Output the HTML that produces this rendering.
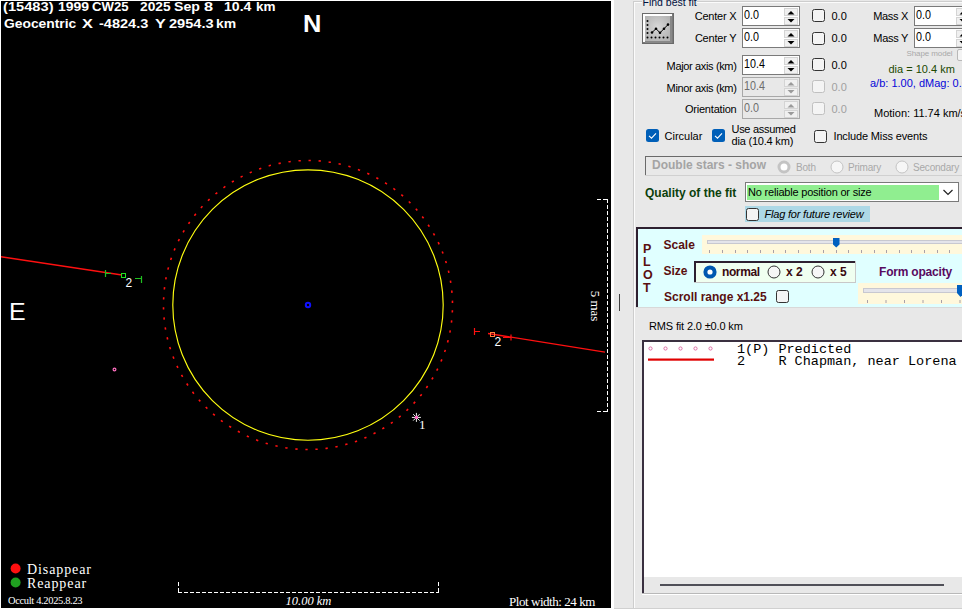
<!DOCTYPE html>
<html><head><meta charset="utf-8">
<style>
*{box-sizing:border-box}
html,body{margin:0;padding:0}
body{width:962px;height:609px;overflow:hidden;position:relative;background:#e8e8e8;font-family:"Liberation Sans",sans-serif;}
.a{position:absolute;white-space:nowrap}
#plotbg{left:0;top:0;width:614px;height:609px;background:#fff}
#plot{left:1px;top:1px;width:610px;height:607px;background:#000;overflow:hidden}
.w{color:#fff}
.ser{font-family:"Liberation Serif",serif}
.hd{font-size:13.5px;font-weight:bold;line-height:14px}
.mono{font-family:"Liberation Mono",monospace}
.lbl{font-size:11px;color:#000}
.inp{background:#fff;border:1px solid #7a7a7a;}
.inp.dis{background:#f0f0f0;border-color:#c4c4c4}
.cb{width:13px;height:13px;border:1px solid #333;border-radius:2px;background:#f7f7f7}
.cb.dis{border-color:#c0c0c0}
.cbon{width:13px;height:13px;border-radius:2px;background:#005fb8}
.spin{width:15px}
</style></head><body>
<div class="a" id="plotbg"></div>
<div class="a" id="plot"></div>
<svg width="962" height="609" style="position:absolute;left:0;top:0">
<defs><clipPath id="pc"><rect x="1" y="1" width="610" height="607"/></clipPath></defs>
<g clip-path="url(#pc)">
<circle cx="308" cy="305" r="144.5" fill="none" stroke="#ff1010" stroke-width="1.6" stroke-dasharray="2.3 7.788" stroke-dashoffset="-5.3"/>
<circle cx="308" cy="305" r="135.2" fill="none" stroke="#ffff10" stroke-width="1.15"/>
<circle cx="308" cy="305" r="2.2" fill="none" stroke="#1010ff" stroke-width="2"/>
<line x1="0" y1="256.6" x2="122" y2="275" stroke="#ff1010" stroke-width="1.3"/>
<rect x="121.5" y="273.5" width="4" height="4" fill="none" stroke="#20e020" stroke-width="1"/>
<path d="M105.5 270V277M106 273.5H111M141.5 276V283M135 278.5H141" stroke="#20c020" stroke-width="1.2" fill="none"/>
<line x1="488" y1="333.5" x2="605" y2="352.2" stroke="#ff1010" stroke-width="1.3"/>
<rect x="490.5" y="332.5" width="4" height="4" fill="none" stroke="#ff8040" stroke-width="1"/>
<path d="M474.5 328V335M475 331.5H480M511 334.5V340.5M503 337.5H511" stroke="#ff1010" stroke-width="1.2" fill="none"/>
<path d="M416.4 412.9V421.9M411.9 417.4H420.9M413.2 414.2L419.6 420.6M413.2 420.6L419.6 414.2" stroke="#f0f0f0" stroke-width="1"/>
<circle cx="416.4" cy="417.4" r="1.6" fill="#ff60c0"/>
<circle cx="114.5" cy="369.5" r="1.4" fill="none" stroke="#ff70c0" stroke-width="1.2"/>
<g fill="none" stroke="#fff" stroke-width="1" stroke-dasharray="4 2">
<path d="M597 199.5H608"/><path d="M607.5 199V412"/><path d="M597 411.5H608"/>
<path d="M178.5 582V593"/><path d="M178 592.5H439"/><path d="M438.5 582V593"/>
</g>

<circle cx="15.6" cy="568.5" r="5" fill="#ff1010"/>
<circle cx="15.6" cy="582.5" r="5" fill="#20a020"/>
</g>
</svg>

<div class="a w" style="left:302.5px;top:11.5px;font-size:24px;font-weight:bold;line-height:24px;transform:scaleX(1.06);transform-origin:left">N</div>
<div class="a w" style="left:9px;top:299px;font-size:24px;line-height:25px;transform:scaleX(1.04);transform-origin:left">E</div>
<div class="a w" style="left:125.5px;top:277px;font-size:12px;line-height:12px">2</div>
<div class="a w" style="left:494.5px;top:336px;font-size:12px;line-height:12px">2</div>
<div class="a w ser" style="left:419px;top:418px;font-size:13px;line-height:13px">1</div>
<div class="a w ser" style="left:27px;top:562px;font-size:14px;line-height:16px;letter-spacing:0.9px">Disappear</div>
<div class="a w ser" style="left:27px;top:576px;font-size:14px;line-height:16px;letter-spacing:0.9px">Reappear</div>
<div class="a w ser" style="left:8px;top:595px;font-size:10.5px;line-height:12px;letter-spacing:-0.35px">Occult 4.2025.8.23</div>
<div class="a w ser" style="left:285.5px;top:594px;font-size:12.5px;font-style:italic;line-height:15px">10.00 km</div>
<div class="a w ser" style="left:509px;top:593.5px;font-size:13px;line-height:15px;letter-spacing:-0.45px">Plot width: 24 km</div>
<div class="a w ser" style="left:580px;top:298px;font-size:13px;line-height:16px;transform:rotate(90deg);transform-origin:center">5 mas</div>
<!--HDR-->
<div class="a w hd" style="left:3.46px;top:0px;transform:scaleX(1.087);transform-origin:0 0">(15483)</div>
<div class="a w hd" style="left:57.97px;top:0px;transform:scaleX(1.034);transform-origin:0 0">1999</div>
<div class="a w hd" style="left:92.00px;top:0px;transform:scaleX(0.973);transform-origin:0 0">CW25</div>
<div class="a w hd" style="left:140.00px;top:0px;transform:scaleX(1.020);transform-origin:0 0">2025</div>
<div class="a w hd" style="left:173.95px;top:0px;transform:scaleX(1.047);transform-origin:0 0">Sep</div>
<div class="a w hd" style="left:204.39px;top:0px;transform:scaleX(1.206);transform-origin:0 0">8</div>
<div class="a w hd" style="left:223.96px;top:0px;transform:scaleX(1.041);transform-origin:0 0">10.4</div>
<div class="a w hd" style="left:256.00px;top:0px;transform:scaleX(1.000);transform-origin:0 0">km</div>
<div class="a w hd" style="left:4.39px;top:17px;transform:scaleX(1.024);transform-origin:0 0">Geocentric</div>
<div class="a w hd" style="left:81.78px;top:17px;transform:scaleX(1.211);transform-origin:0 0">X</div>
<div class="a w hd" style="left:99.00px;top:17px;transform:scaleX(1.076);transform-origin:0 0">-4824.3</div>
<div class="a w hd" style="left:155.3px;top:17px;transform:scaleX(1.2);transform-origin:0 0">Y</div>
<div class="a w hd" style="left:169px;top:17px;transform:scaleX(1.08);transform-origin:0 0">2954.3</div>
<div class="a w hd" style="left:215.78px;top:17px;transform:scaleX(1.033);transform-origin:0 0">km</div>
<!--/HDR-->
<!--PANEL-->
<div class="a" style="left:633px;top:1px;width:1px;height:608px;background:#cdcdcd"></div>
<div class="a" style="left:634px;top:2px;width:1px;height:607px;background:#fbfbfb"></div>
<div class="a" style="left:633px;top:1px;width:9px;height:1px;background:#cdcdcd"></div>
<div class="a" style="left:697px;top:1px;width:265px;height:1px;background:#cdcdcd"></div>
<div class="a" style="left:634px;top:2px;width:8px;height:1px;background:#fbfbfb"></div>
<div class="a" style="left:697px;top:2px;width:265px;height:1px;background:#fbfbfb"></div>
<div class="a" style="left:642.5px;top:-3px;font-size:10.5px;line-height:10.5px;color:#001040;font-weight:normal;font-style:normal;">Find best fit</div>
<svg class="a" style="left:642px;top:13px" width="32" height="32" viewBox="0 0 32 32">
<defs><radialGradient id="bg1" cx="50%" cy="45%" r="60%"><stop offset="0" stop-color="#d8d8d8"/><stop offset="1" stop-color="#b4b4b4"/></radialGradient></defs>
<rect x="0.5" y="0.5" width="31" height="30" fill="#7a7a7a" stroke="#6a6a6a"/>
<rect x="1" y="1" width="29" height="28" fill="#fff"/>
<rect x="3" y="3" width="27" height="27" fill="#888"/>
<rect x="3" y="3" width="25" height="25" fill="url(#bg1)"/>
<g fill="#000">
<circle cx="5.5" cy="8" r="1"/><circle cx="5.5" cy="12" r="1"/><circle cx="5.5" cy="16" r="1"/><circle cx="5.5" cy="20" r="1"/><circle cx="5.5" cy="24.5" r="1"/>
<circle cx="9.5" cy="24.5" r="1"/><circle cx="13.5" cy="24.5" r="1"/><circle cx="17.5" cy="24.5" r="1"/><circle cx="21.5" cy="24.5" r="1"/><circle cx="25.5" cy="24.5" r="1"/>
<circle cx="10" cy="19.5" r="1.3"/><circle cx="14" cy="15.7" r="1.3"/><circle cx="18" cy="19.8" r="1.3"/><circle cx="22" cy="15.7" r="1.3"/><circle cx="26" cy="11.6" r="1.3"/>
</g>
<path d="M10 19.5L14 15.7L18 19.8L22 15.7L26 11.6" stroke="#000" stroke-width="1" fill="none"/>
</svg>
<div class="a" style="right:225.5px;top:11px;font-size:11px;line-height:11px;color:#000;font-weight:normal;font-style:normal;letter-spacing:-0.2px">Center X</div>
<div class="a" style="left:742px;top:6px;width:58px;height:20px;background:#fff;border:1px solid #7a7a7a"></div>
<div class="a" style="left:743.5px;top:9px;font-size:12.5px;line-height:12.5px;color:#000;font-weight:normal;font-style:normal;transform:scaleX(0.86);transform-origin:0 0">0.0</div>
<div class="a" style="left:784px;top:7.5px;width:14px;height:8px;background:#f0f0f0;border:1px solid #d4d4d4"></div>
<div class="a" style="left:784px;top:16.5px;width:14px;height:8px;background:#f0f0f0;border:1px solid #d4d4d4"></div>
<svg class="a" style="left:784px;top:7.5px" width="14" height="17"><path d="M3.5 6.5L7 3L10.5 6.5Z" fill="#000"/><path d="M3.5 11L7 14.5L10.5 11Z" fill="#000"/></svg>
<div class="a" style="left:812px;top:9.4px;width:13px;height:13px;border:1px solid #333;border-radius:2.5px;background:#f4f4f4"></div>
<div class="a" style="left:831.5px;top:11px;font-size:11px;line-height:11px;color:#000;font-weight:normal;font-style:normal;">0.0</div>
<div class="a" style="right:225.5px;top:33px;font-size:11px;line-height:11px;color:#000;font-weight:normal;font-style:normal;letter-spacing:-0.2px">Center Y</div>
<div class="a" style="left:742px;top:28px;width:58px;height:20px;background:#fff;border:1px solid #7a7a7a"></div>
<div class="a" style="left:743.5px;top:31px;font-size:12.5px;line-height:12.5px;color:#000;font-weight:normal;font-style:normal;transform:scaleX(0.86);transform-origin:0 0">0.0</div>
<div class="a" style="left:784px;top:29.5px;width:14px;height:8px;background:#f0f0f0;border:1px solid #d4d4d4"></div>
<div class="a" style="left:784px;top:38.5px;width:14px;height:8px;background:#f0f0f0;border:1px solid #d4d4d4"></div>
<svg class="a" style="left:784px;top:29.5px" width="14" height="17"><path d="M3.5 6.5L7 3L10.5 6.5Z" fill="#000"/><path d="M3.5 11L7 14.5L10.5 11Z" fill="#000"/></svg>
<div class="a" style="left:812px;top:31.5px;width:13px;height:13px;border:1px solid #333;border-radius:2.5px;background:#f4f4f4"></div>
<div class="a" style="left:831.5px;top:33px;font-size:11px;line-height:11px;color:#000;font-weight:normal;font-style:normal;">0.0</div>
<div class="a" style="right:225.5px;top:61px;font-size:11px;line-height:11px;color:#000;font-weight:normal;font-style:normal;letter-spacing:-0.35px">Major axis (km)</div>
<div class="a" style="left:742px;top:55px;width:58px;height:20px;background:#fff;border:1px solid #7a7a7a"></div>
<div class="a" style="left:743.5px;top:58px;font-size:12.5px;line-height:12.5px;color:#000;font-weight:normal;font-style:normal;transform:scaleX(0.86);transform-origin:0 0">10.4</div>
<div class="a" style="left:784px;top:56.5px;width:14px;height:8px;background:#f0f0f0;border:1px solid #d4d4d4"></div>
<div class="a" style="left:784px;top:65.5px;width:14px;height:8px;background:#f0f0f0;border:1px solid #d4d4d4"></div>
<svg class="a" style="left:784px;top:56.5px" width="14" height="17"><path d="M3.5 6.5L7 3L10.5 6.5Z" fill="#000"/><path d="M3.5 11L7 14.5L10.5 11Z" fill="#000"/></svg>
<div class="a" style="left:812px;top:58px;width:13px;height:13px;border:1px solid #333;border-radius:2.5px;background:#f4f4f4"></div>
<div class="a" style="left:831.5px;top:60px;font-size:11px;line-height:11px;color:#000;font-weight:normal;font-style:normal;">0.0</div>
<div class="a" style="right:225.5px;top:83px;font-size:11px;line-height:11px;color:#000;font-weight:normal;font-style:normal;letter-spacing:-0.35px">Minor axis (km)</div>
<div class="a" style="left:742px;top:77px;width:58px;height:20px;background:#e8e8e8;border:1px solid #a8a8a8"></div>
<div class="a" style="left:743.5px;top:80px;font-size:12.5px;line-height:12.5px;color:#6d6d6d;font-weight:normal;font-style:normal;transform:scaleX(0.86);transform-origin:0 0">10.4</div>
<div class="a" style="left:784px;top:78.5px;width:14px;height:8px;background:#f0f0f0;border:1px solid #d4d4d4"></div>
<div class="a" style="left:784px;top:87.5px;width:14px;height:8px;background:#f0f0f0;border:1px solid #d4d4d4"></div>
<svg class="a" style="left:784px;top:78.5px" width="14" height="17"><path d="M3.5 6.5L7 3L10.5 6.5Z" fill="#9a9a9a"/><path d="M3.5 11L7 14.5L10.5 11Z" fill="#9a9a9a"/></svg>
<div class="a" style="left:812px;top:80.3px;width:13px;height:13px;border:1px solid #c0c0c0;border-radius:2.5px;background:#f4f4f4"></div>
<div class="a" style="left:831.5px;top:82px;font-size:11px;line-height:11px;color:#a0a0a0;font-weight:normal;font-style:normal;">0.0</div>
<div class="a" style="right:225.5px;top:104px;font-size:11px;line-height:11px;color:#000;font-weight:normal;font-style:normal;letter-spacing:-0.2px">Orientation</div>
<div class="a" style="left:742px;top:99px;width:58px;height:20px;background:#e8e8e8;border:1px solid #a8a8a8"></div>
<div class="a" style="left:743.5px;top:102px;font-size:12.5px;line-height:12.5px;color:#6d6d6d;font-weight:normal;font-style:normal;transform:scaleX(0.86);transform-origin:0 0">0.0</div>
<div class="a" style="left:784px;top:100.5px;width:14px;height:8px;background:#f0f0f0;border:1px solid #d4d4d4"></div>
<div class="a" style="left:784px;top:109.5px;width:14px;height:8px;background:#f0f0f0;border:1px solid #d4d4d4"></div>
<svg class="a" style="left:784px;top:100.5px" width="14" height="17"><path d="M3.5 6.5L7 3L10.5 6.5Z" fill="#9a9a9a"/><path d="M3.5 11L7 14.5L10.5 11Z" fill="#9a9a9a"/></svg>
<div class="a" style="left:812px;top:102.4px;width:13px;height:13px;border:1px solid #c0c0c0;border-radius:2.5px;background:#f4f4f4"></div>
<div class="a" style="left:831.5px;top:104px;font-size:11px;line-height:11px;color:#a0a0a0;font-weight:normal;font-style:normal;">0.0</div>
<div class="a" style="right:54px;top:11px;font-size:11px;line-height:11px;color:#000;font-weight:normal;font-style:normal;letter-spacing:-0.3px">Mass X</div>
<div class="a" style="right:54px;top:33px;font-size:11px;line-height:11px;color:#000;font-weight:normal;font-style:normal;letter-spacing:-0.3px">Mass Y</div>
<div class="a" style="left:914px;top:6px;width:58px;height:20px;background:#fff;border:1px solid #7a7a7a"></div>
<div class="a" style="left:915.5px;top:9px;font-size:12.5px;line-height:12.5px;color:#000;font-weight:normal;font-style:normal;transform:scaleX(0.86);transform-origin:0 0">0.0</div>
<div class="a" style="left:956px;top:7.5px;width:14px;height:8px;background:#f0f0f0;border:1px solid #d4d4d4"></div>
<div class="a" style="left:956px;top:16.5px;width:14px;height:8px;background:#f0f0f0;border:1px solid #d4d4d4"></div>
<svg class="a" style="left:956px;top:7.5px" width="14" height="17"><path d="M3.5 6.5L7 3L10.5 6.5Z" fill="#000"/><path d="M3.5 11L7 14.5L10.5 11Z" fill="#000"/></svg>
<div class="a" style="left:914px;top:28px;width:58px;height:20px;background:#fff;border:1px solid #7a7a7a"></div>
<div class="a" style="left:915.5px;top:31px;font-size:12.5px;line-height:12.5px;color:#000;font-weight:normal;font-style:normal;transform:scaleX(0.86);transform-origin:0 0">0.0</div>
<div class="a" style="left:956px;top:29.5px;width:14px;height:8px;background:#f0f0f0;border:1px solid #d4d4d4"></div>
<div class="a" style="left:956px;top:38.5px;width:14px;height:8px;background:#f0f0f0;border:1px solid #d4d4d4"></div>
<svg class="a" style="left:956px;top:29.5px" width="14" height="17"><path d="M3.5 6.5L7 3L10.5 6.5Z" fill="#000"/><path d="M3.5 11L7 14.5L10.5 11Z" fill="#000"/></svg>
<div class="a" style="left:906.5px;top:50px;font-size:8px;line-height:8px;color:#a8a8a8;font-weight:normal;font-style:normal;letter-spacing:-0.1px">Shape model</div>
<div class="a" style="left:957px;top:49px;width:10px;height:12px;border:1px solid #b8b8b8;border-radius:2px;background:#f4f4f4"></div>
<div class="a" style="left:888.5px;top:64px;font-size:11px;line-height:11px;color:#204800;font-weight:normal;font-style:normal;">dia = 10.4 km</div>
<div class="a" style="left:870px;top:78px;font-size:11px;line-height:11px;color:#0606d8;font-weight:normal;font-style:normal;">a/b: 1.00, dMag: 0.0</div>
<div class="a" style="left:874px;top:108px;font-size:11px;line-height:11px;color:#000;font-weight:normal;font-style:normal;">Motion: 11.74 km/s</div>
<svg class="a" style="left:646px;top:129px" width="13" height="13"><rect width="13" height="13" rx="2.5" fill="#005fb8"/><path d="M3 6.8L5.5 9.2L10 4.3" stroke="#fff" stroke-width="1.1" fill="none"/></svg>
<div class="a" style="left:664.5px;top:131px;font-size:11px;line-height:11px;color:#000;font-weight:normal;font-style:normal;">Circular</div>
<svg class="a" style="left:712px;top:129px" width="13" height="13"><rect width="13" height="13" rx="2.5" fill="#005fb8"/><path d="M3 6.8L5.5 9.2L10 4.3" stroke="#fff" stroke-width="1.1" fill="none"/></svg>
<div class="a" style="left:731.5px;top:124px;font-size:11px;line-height:11px;color:#000;font-weight:normal;font-style:normal;letter-spacing:-0.3px">Use assumed</div>
<div class="a" style="left:731.5px;top:136px;font-size:11px;line-height:11px;color:#000;font-weight:normal;font-style:normal;letter-spacing:-0.2px">dia (10.4 km)</div>
<div class="a" style="left:814px;top:130px;width:13px;height:13px;border:1px solid #333;border-radius:2.5px;background:#f4f4f4"></div>
<div class="a" style="left:833.5px;top:131px;font-size:11px;line-height:11px;color:#000;font-weight:normal;font-style:normal;letter-spacing:-0.15px">Include Miss events</div>
<div class="a" style="left:645px;top:156px;width:330px;height:20px;border-top:1px solid #6a6a6a;border-left:1px solid #6a6a6a;border-bottom:1px solid #fff;background:#e8e8e8"></div>
<div class="a" style="left:645px;top:175px;width:330px;height:1px;background:#d0d0d0"></div>
<div class="a" style="left:652px;top:159px;font-size:12px;line-height:12px;color:#a4a4a4;font-weight:bold;font-style:normal;">Double stars - show</div>
<svg class="a" style="left:777px;top:160px" width="14" height="14"><circle cx="7" cy="7" r="5" fill="#fff" stroke="#c4c4c4" stroke-width="3"/></svg>
<div class="a" style="left:796px;top:163px;font-size:10px;line-height:10px;color:#a8a8a8;font-weight:normal;font-style:normal;letter-spacing:-0.2px">Both</div>
<svg class="a" style="left:830px;top:160px" width="14" height="14"><circle cx="7" cy="7" r="6" fill="#f6f6f6" stroke="#c4c4c4" stroke-width="1"/></svg>
<div class="a" style="left:848px;top:163px;font-size:10px;line-height:10px;color:#a8a8a8;font-weight:normal;font-style:normal;letter-spacing:-0.2px">Primary</div>
<svg class="a" style="left:895px;top:160px" width="14" height="14"><circle cx="7" cy="7" r="6" fill="#f6f6f6" stroke="#c4c4c4" stroke-width="1"/></svg>
<div class="a" style="left:913px;top:163px;font-size:10px;line-height:10px;color:#a8a8a8;font-weight:normal;font-style:normal;letter-spacing:-0.2px">Secondary</div>
<div class="a" style="left:645px;top:187px;font-size:12px;line-height:12px;color:#0c400c;font-weight:bold;font-style:normal;">Quality of the fit</div>
<div class="a" style="left:745px;top:182px;width:214px;height:20px;background:#fff;border:1px solid #7a7a7a"></div>
<div class="a" style="left:747px;top:185px;width:192px;height:15px;background:#90ee90"></div>
<div class="a" style="left:748px;top:187px;font-size:11px;line-height:11px;color:#000;font-weight:normal;font-style:normal;letter-spacing:-0.2px">No reliable position or size</div>
<svg class="a" style="left:940px;top:186px" width="16" height="12"><path d="M3.5 4L8 8.5L12.5 4" stroke="#222" stroke-width="1.2" fill="none"/></svg>
<div class="a" style="left:745px;top:206px;width:125px;height:16px;background:#add8e6"></div>
<div class="a" style="left:745.5px;top:207.5px;width:13px;height:13px;border:1px solid #333;border-radius:2.5px;background:#f4f4f4"></div>
<div class="a" style="left:764.5px;top:209px;font-size:11px;line-height:11px;color:#000;font-weight:normal;font-style:italic;letter-spacing:-0.2px">Flag for future review</div>
<div class="a" style="left:636px;top:227px;width:340px;height:81px;border-top:2px solid #2e2030;border-left:2px solid #2e2030;background:#e0ffff"></div>
<div class="a" style="left:636px;top:306.5px;width:340px;height:1.5px;background:#d8d8d8"></div>
<div class="a" style="left:643px;top:243px;font-size:12.5px;line-height:12.5px;color:#5a1010;font-weight:bold;font-style:normal;">P</div>
<div class="a" style="left:643px;top:256px;font-size:12.5px;line-height:12.5px;color:#5a1010;font-weight:bold;font-style:normal;">L</div>
<div class="a" style="left:643px;top:269px;font-size:12.5px;line-height:12.5px;color:#5a1010;font-weight:bold;font-style:normal;">O</div>
<div class="a" style="left:643px;top:282px;font-size:12.5px;line-height:12.5px;color:#5a1010;font-weight:bold;font-style:normal;">T</div>
<div class="a" style="left:663.5px;top:239px;font-size:12px;line-height:12px;color:#5a1010;font-weight:bold;font-style:normal;">Scale</div>
<div class="a" style="left:702px;top:235px;width:270px;height:18.5px;background:#fff8dc"></div>
<div class="a" style="left:707px;top:239.5px;width:260px;height:4.5px;background:#e4e4ea;border:1px solid #c8c8d0"></div>
<svg class="a" style="left:702px;top:235px" width="260" height="19"><line x1="7.5" y1="15" x2="7.5" y2="18" stroke="#a8a0a8"/><line x1="20.5" y1="15" x2="20.5" y2="18" stroke="#a8a0a8"/><line x1="33.5" y1="15" x2="33.5" y2="18" stroke="#a8a0a8"/><line x1="45.5" y1="15" x2="45.5" y2="18" stroke="#a8a0a8"/><line x1="58.5" y1="15" x2="58.5" y2="18" stroke="#a8a0a8"/><line x1="71.5" y1="15" x2="71.5" y2="18" stroke="#a8a0a8"/><line x1="83.5" y1="15" x2="83.5" y2="18" stroke="#a8a0a8"/><line x1="96.5" y1="15" x2="96.5" y2="18" stroke="#a8a0a8"/><line x1="108.5" y1="15" x2="108.5" y2="18" stroke="#a8a0a8"/><line x1="121.5" y1="15" x2="121.5" y2="18" stroke="#a8a0a8"/><line x1="134.5" y1="15" x2="134.5" y2="18" stroke="#a8a0a8"/><line x1="146.5" y1="15" x2="146.5" y2="18" stroke="#a8a0a8"/><line x1="159.5" y1="15" x2="159.5" y2="18" stroke="#a8a0a8"/><line x1="172.5" y1="15" x2="172.5" y2="18" stroke="#a8a0a8"/><line x1="184.5" y1="15" x2="184.5" y2="18" stroke="#a8a0a8"/><line x1="197.5" y1="15" x2="197.5" y2="18" stroke="#a8a0a8"/><line x1="209.5" y1="15" x2="209.5" y2="18" stroke="#a8a0a8"/><line x1="222.5" y1="15" x2="222.5" y2="18" stroke="#a8a0a8"/><line x1="235.5" y1="15" x2="235.5" y2="18" stroke="#a8a0a8"/><line x1="247.5" y1="15" x2="247.5" y2="18" stroke="#a8a0a8"/><line x1="260.5" y1="15" x2="260.5" y2="18" stroke="#a8a0a8"/></svg>
<svg class="a" style="left:833px;top:238px" width="7" height="10"><path d="M0 0H6.5V6.5L3.25 9.5L0 6.5Z" fill="#0060c0"/></svg>
<div class="a" style="left:663.5px;top:265px;font-size:12px;line-height:12px;color:#5a1010;font-weight:bold;font-style:normal;">Size</div>
<div class="a" style="left:694px;top:261px;width:162px;height:22px;border-top:2px solid #2e2030;border-left:2px solid #2e2030;background:#f0fff0"></div>
<div class="a" style="left:694px;top:282px;width:162px;height:1px;background:#c8c8c8"></div>
<div class="a" style="left:855px;top:261px;width:1px;height:22px;background:#c8c8c8"></div>
<svg class="a" style="left:703px;top:265px" width="14" height="14"><circle cx="7" cy="7" r="4.6" fill="#fff" stroke="#0058b0" stroke-width="4"/></svg>
<div class="a" style="left:722px;top:266px;font-size:12px;line-height:12px;color:#3a0a10;font-weight:bold;font-style:normal;letter-spacing:-0.4px">normal</div>
<svg class="a" style="left:767px;top:265px" width="14" height="14"><circle cx="7" cy="7" r="6" fill="#f6f6f6" stroke="#333" stroke-width="1"/></svg>
<div class="a" style="left:786px;top:266px;font-size:12px;line-height:12px;color:#3a0a10;font-weight:bold;font-style:normal;">x 2</div>
<svg class="a" style="left:811px;top:265px" width="14" height="14"><circle cx="7" cy="7" r="6" fill="#f6f6f6" stroke="#333" stroke-width="1"/></svg>
<div class="a" style="left:830px;top:266px;font-size:12px;line-height:12px;color:#3a0a10;font-weight:bold;font-style:normal;">x 5</div>
<div class="a" style="left:879px;top:266px;font-size:12px;line-height:12px;color:#580a60;font-weight:bold;font-style:normal;letter-spacing:-0.2px">Form opacity</div>
<div class="a" style="left:858px;top:283px;width:110px;height:20.5px;background:#fff8dc"></div>
<div class="a" style="left:863px;top:288px;width:110px;height:4.5px;background:#e4e4ea;border:1px solid #c8c8d0"></div>
<svg class="a" style="left:858px;top:283px" width="104" height="21"><line x1="9.5" y1="17" x2="9.5" y2="20" stroke="#a8a0a8"/><line x1="28.0" y1="17" x2="28.0" y2="20" stroke="#a8a0a8"/><line x1="46.5" y1="17" x2="46.5" y2="20" stroke="#a8a0a8"/><line x1="65.0" y1="17" x2="65.0" y2="20" stroke="#a8a0a8"/><line x1="83.5" y1="17" x2="83.5" y2="20" stroke="#a8a0a8"/><line x1="102.0" y1="17" x2="102.0" y2="20" stroke="#a8a0a8"/></svg>
<svg class="a" style="left:957px;top:285px" width="8" height="13"><path d="M0 0H7V8L3.5 12L0 8Z" fill="#0060c0"/></svg>
<div class="a" style="left:664px;top:291px;font-size:12px;line-height:12px;color:#5a1010;font-weight:bold;font-style:normal;">Scroll range x1.25</div>
<div class="a" style="left:776px;top:290px;width:13px;height:13px;border:1px solid #333;border-radius:2.5px;background:#f4f4f4"></div>
<div class="a" style="left:619px;top:294px;width:1px;height:17px;background:#404040"></div>
<div class="a" style="left:649px;top:321px;font-size:11px;line-height:11px;color:#000;font-weight:normal;font-style:normal;letter-spacing:-0.15px">RMS fit 2.0 &plusmn;0.0 km</div>
<div class="a" style="left:642px;top:340px;width:330px;height:253px;border-top:2px solid #3a3040;border-left:2px solid #3a3040;background:#fff"></div>
<div class="a" style="left:644px;top:577px;width:330px;height:16px;background:#e8e8e8"></div>
<div class="a" style="left:660px;top:584px;width:284px;height:2px;background:#505058"></div>
<div class="a" style="left:642px;top:593px;width:320px;height:1px;background:#b8b8b8"></div>
<div class="a" style="left:642px;top:594px;width:320px;height:1px;background:#fff"></div>
<svg class="a" style="left:644px;top:342px" width="80" height="22"><circle cx="6.5" cy="6.5" r="1.6" fill="none" stroke="#e070a8" stroke-width="1"/><circle cx="21.5" cy="6.5" r="1.6" fill="none" stroke="#e070a8" stroke-width="1"/><circle cx="36.5" cy="6.5" r="1.6" fill="none" stroke="#e070a8" stroke-width="1"/><circle cx="51.5" cy="6.5" r="1.6" fill="none" stroke="#e070a8" stroke-width="1"/><circle cx="66.5" cy="6.5" r="1.6" fill="none" stroke="#e070a8" stroke-width="1"/><rect x="4" y="16.5" width="66" height="2.2" fill="#e00000"/></svg>
<div class="a" style="left:737px;top:343px;font-size:13.5px;line-height:13.5px;color:#000;font-weight:normal;font-style:normal;font-family:'Liberation Mono',monospace;">1(P)</div>
<div class="a" style="left:778.4px;top:343px;font-size:13.5px;line-height:13.5px;color:#000;font-weight:normal;font-style:normal;font-family:'Liberation Mono',monospace;">Predicted</div>
<div class="a" style="left:737px;top:355px;font-size:13.5px;line-height:13.5px;color:#000;font-weight:normal;font-style:normal;font-family:'Liberation Mono',monospace;">2</div>
<div class="a" style="left:778.4px;top:355px;font-size:13.5px;line-height:13.5px;color:#000;font-weight:normal;font-style:normal;font-family:'Liberation Mono',monospace;">R Chapman, near Lorena</div>
<div class="a" style="left:614px;top:608px;width:348px;height:1px;background:#d0d0d0"></div>
<!--/PANEL-->
</body></html>
